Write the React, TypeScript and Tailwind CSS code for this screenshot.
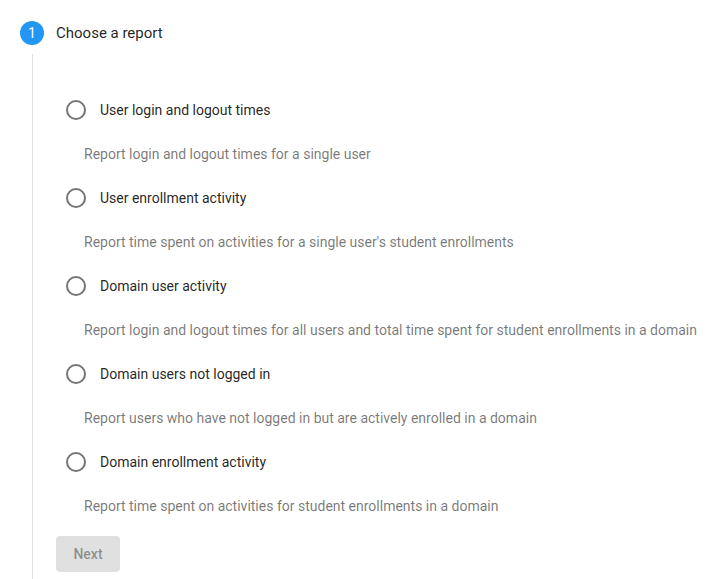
import React from "react";

const items = [
  { label: "User login and logout times", desc: "Report login and logout times for a single user" },
  { label: "User enrollment activity", desc: "Report time spent on activities for a single user's student enrollments" },
  { label: "Domain user activity", desc: "Report login and logout times for all users and total time spent for student enrollments in a domain" },
  { label: "Domain users not logged in", desc: "Report users who have not logged in but are actively enrolled in a domain" },
  { label: "Domain enrollment activity", desc: "Report time spent on activities for student enrollments in a domain" },
];

export default function App() {
  return (
    <div className="w-[724px] h-[579px] overflow-hidden bg-white font-['Roboto',sans-serif] text-[14px]">
      <div className="pl-[20px] pt-[21px]">
        <div className="flex items-center h-[24px] gap-[12px]">
          <div className="w-[24px] h-[24px] rounded-full bg-[#2196f3] text-white text-[14px] flex items-center justify-center">
            1
          </div>
          <div className="text-black/[0.87] text-[15px] leading-[20px]">Choose a report</div>
        </div>
        <div className="ml-[12px] mt-[9px] border-l border-[#e0e0e0] pl-[23px] pt-[44px] pb-[24px]">
          {items.map((it) => (
            <div key={it.label} className="pl-[10px]">
              <div className="flex items-center h-[24px] gap-[14px]">
                <div className="w-[20px] h-[20px] rounded-full border-2 border-[#757575] box-border" />
                <div className="text-black/[0.87] leading-[20px]">{it.label}</div>
              </div>
              <div className="mt-[22px] mb-[22px] pl-[18px] leading-[20px] text-black/[0.54] whitespace-nowrap">
                {it.desc}
              </div>
            </div>
          ))}
          <button className="mt-[-2px] w-[64px] h-[36px] rounded-[4px] bg-black/[0.12] text-black/[0.38] font-medium text-[14px]">
            Next
          </button>
        </div>
      </div>
    </div>
  );
}
